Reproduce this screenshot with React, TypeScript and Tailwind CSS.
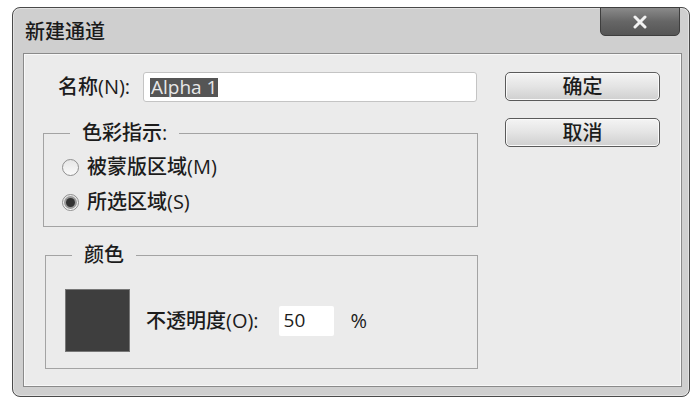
import type { ReactNode } from "react";

const font = "font-['Open_Sans','Noto_Sans_CJK_SC',sans-serif] font-medium";

function Group({ legend, className, children }: { legend: string; className: string; children: ReactNode }) {
  return (
    <fieldset className={`border border-[#a3a3a3] ${className}`}>
      <legend className="ml-[26px] px-[12px] text-[20px] leading-[24px] text-[#1c1c1c]">{legend}</legend>
      {children}
    </fieldset>
  );
}

function Radio({ checked, label }: { checked?: boolean; label: string }) {
  return (
    <label className="flex h-[24px] items-center gap-[8px] text-[20px] text-[#1c1c1c]">
      <span className="flex h-[17px] w-[17px] items-center justify-center rounded-full border border-[#8f8f8f] bg-gradient-to-b from-[#e6e6e6] to-[#fafafa]">
        {checked && <span className="h-[9px] w-[9px] rounded-full bg-[#333] ring-2 ring-[#9a9a9a]" />}
      </span>
      {label}
    </label>
  );
}

function Button({ children }: { children: ReactNode }) {
  return (
    <button className="h-[29px] w-[155px] rounded-[5px] border border-[#5a5a5a] bg-gradient-to-b from-[#f4f4f4] via-[#e4e4e4] to-[#cfcfcf] text-[20px] leading-none text-[#1c1c1c] shadow-[inset_0_0_0_1px_#fafafa]">
      {children}
    </button>
  );
}

export default function App() {
  return (
    <div className={`h-[404px] w-[700px] bg-white pl-[12px] pt-[7px] ${font}`}>
      <div className="flex h-[390px] w-[678px] flex-col rounded-[8px] border border-[#4a4a4a] bg-[#cfcfcf] shadow-[inset_0_0_0_1px_#e2e2e2]">
        <div className="flex h-[45px] items-start justify-between">
          <span className="ml-[12px] mt-[12px] text-[20px] leading-[24px] text-[#1a1a1a]">新建通道</span>
          <button className="-mt-[1px] mr-[9px] flex h-[29px] w-[80px] items-center justify-center rounded-b-[5px] border border-[#3e3e3e] bg-gradient-to-b from-[#8a8a8a] via-[#666] to-[#555]">
            <svg width="16" height="14" viewBox="0 0 16 14">
              <path d="M3 2 L13 12 M13 2 L3 12" stroke="#f2f2f2" strokeWidth="3" strokeLinecap="round" />
            </svg>
          </button>
        </div>
        <div className="mb-[9px] ml-[10px] mr-[7px] flex flex-1 border border-[#8a8a8a] bg-[#ebebeb] pl-[19px] shadow-[inset_0_0_0_1px_#f8f8f8]">
          <div className="flex w-[435px] flex-col pt-[18px]">
            <div className="flex items-center">
              <span className="ml-[15px] w-[85px] text-[20px] text-[#1c1c1c]">名称(N):</span>
              <div className="flex h-[30px] w-[334px] items-center rounded-[3px] border border-[#c4c4c4] bg-white pl-[6px]">
                <span className="bg-[#555] px-[1px] text-[19px] font-normal leading-[19px] text-[#e8e8e8]">Alpha 1</span>
              </div>
            </div>
            <Group legend="色彩指示:" className="mt-[19px] h-[106px]">
              <div className="flex flex-col gap-[11px] pl-[18px] pt-[10px]">
                <Radio label="被蒙版区域(M)" />
                <Radio checked label="所选区域(S)" />
              </div>
            </Group>
            <Group legend="颜色" className="ml-[2px] mt-[16px] h-[126px]">
              <div className="flex items-center pl-[19px] pt-[22px]">
                <div className="h-[63px] w-[65px] border border-[#777] bg-[#3e3e3e]" />
                <span className="ml-[16px] text-[20px] text-[#1c1c1c]">不透明度(O):</span>
                <div className="ml-[20px] flex h-[30px] w-[55px] items-center rounded-[2px] bg-white pl-[5px] text-[19px] font-normal text-[#1c1c1c]">50</div>
                <span className="ml-[17px] text-[20px] text-[#1c1c1c]">%</span>
              </div>
            </Group>
          </div>
          <div className="ml-[27px] flex flex-col gap-[17px] pt-[18px]">
            <Button>确定</Button>
            <Button>取消</Button>
          </div>
        </div>
      </div>
    </div>
  );
}
